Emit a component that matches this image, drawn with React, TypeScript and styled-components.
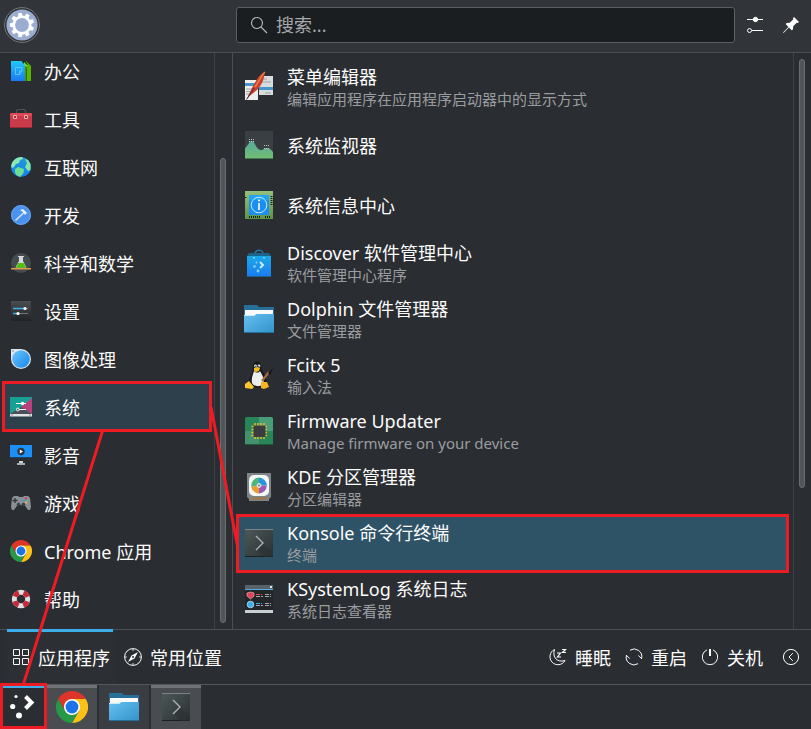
import React from "react";
import styled, { createGlobalStyle } from "styled-components";

const GlobalStyle = createGlobalStyle`
  * { box-sizing: border-box; }
  body {
    margin: 0;
    background: #2a2d31;
    color: #fcfcfc;
    font-family: "Noto Sans", "Noto Sans CJK SC", sans-serif;
    font-size: 18px;
  }
  button, input { font: inherit; color: inherit; }
  svg { display: block; }
`;

const MARK = "#ed1c24";
const LINE = "#4b4e52";

const Screen = styled.div`
  position: relative;
  display: flex;
  flex-direction: column;
  height: 100vh;
  overflow: hidden;
`;

const Header = styled.header`
  display: flex;
  align-items: center;
  height: 53px;
  padding: 0 8px 2px 4px;
  background: #313439;
  border-bottom: 1px solid ${LINE};
`;

const PlainButton = styled.button`
  display: flex;
  align-items: center;
  padding: 0;
  border: 0;
  background: none;
  cursor: pointer;
`;

const AvatarSlot = styled.div`
  flex: 0 0 232px;
`;

const SearchBox = styled.label`
  display: flex;
  flex: 1;
  align-items: center;
  gap: 8px;
  min-width: 0;
  height: 36px;
  padding-left: 13px;
  border: 1px solid #5c6063;
  border-radius: 3px;
  background: #1b1e20;
`;

const SearchInput = styled.input`
  flex: 1;
  min-width: 0;
  padding: 0;
  border: 0;
  outline: 0;
  background: none;
  &::placeholder { color: #a4a8ab; opacity: 1; }
`;

const HeaderActions = styled.div`
  display: flex;
  gap: 12px;
  padding-left: 8px;
`;

const IconButton = styled(PlainButton)`
  justify-content: center;
  width: 24px;
  height: 32px;
`;

const Content = styled.main`
  display: grid;
  grid-template-columns: 215px 18px minmax(0, 1fr) 17px;
  flex: 1;
  min-height: 0;
`;

const CategoryList = styled.ul`
  display: flex;
  flex-direction: column;
  justify-content: flex-end;
  min-height: 0;
  margin: 0;
  padding: 0 0 6px;
  overflow: hidden;
  list-style: none;
  border-right: 1px solid #3d4044;
`;

const Category = styled.li`
  position: relative;
  flex: none;
`;

const CategoryButton = styled(PlainButton)`
  position: relative;
  gap: 12px;
  width: 100%;
  height: 48px;
  padding-left: 10px;
`;

const CategoryName = styled.span`
  padding-top: 2px;
  line-height: 24px;
`;

const Scroll = styled.div<{ $divider?: boolean; $top: number; $bottom: number }>`
  padding: ${(p) => p.$top}px 0 ${(p) => p.$bottom}px 5px;
  border-right: ${(p) => (p.$divider ? `1px solid ${LINE}` : "0")};
`;

const Thumb = styled.div`
  width: 6px;
  height: 100%;
  border: 1px solid #6b6e70;
  border-radius: 3px;
  background: #515558;
`;

const AppList = styled.ul`
  margin: 0;
  padding: 6px 0 0;
  overflow: hidden;
  list-style: none;
  border-right: 1px solid #3d4044;
`;

const AppItem = styled.li`
  position: relative;
`;

const AppButton = styled(PlainButton)<{ $single?: boolean }>`
  position: relative;
  gap: 13px;
  width: 100%;
  height: ${(p) => (p.$single ? 60 : 56)}px;
  padding-left: 11px;
  text-align: left;
`;

const AppText = styled.span`
  display: flex;
  flex-direction: column;
  gap: 1px;
  padding-top: 1px;
`;

const AppName = styled.span`
  line-height: 22px;
`;

const AppNote = styled.span`
  color: #9a9da0;
  font-size: 15px;
  line-height: 20px;
`;

const Marker = styled.span<{ $wide?: boolean }>`
  position: absolute;
  inset: ${(p) => (p.$wide ? "-1px 4px -2px 3px" : "-2px 2px -1px 2px")};
  border: 3px solid ${MARK};
  background: ${(p) => (p.$wide ? "#2e5366" : "#2e404b")};
  pointer-events: none;
`;

const Footer = styled.nav`
  display: flex;
  height: 55px;
  padding-left: 4px;
  border-top: 1px solid ${LINE};
`;

const Tab = styled(PlainButton)<{ $active?: boolean }>`
  position: relative;
  gap: 8px;
  padding: 0 6px 0 8px;
  background: ${(p) => (p.$active ? "#2c2f33" : "none")};
  &::before {
    content: "";
    display: ${(p) => (p.$active ? "block" : "none")};
    position: absolute;
    top: -1px;
    left: 3px;
    right: 3px;
    height: 3px;
    background: #3daee9;
  }
`;

const Session = styled.div`
  display: flex;
  margin-left: auto;
`;

const SessionButton = styled(PlainButton)`
  gap: 8px;
  padding: 0 7px;
`;

const LeaveButton = styled(PlainButton)`
  padding: 0 11px 0 12px;
`;

const Taskbar = styled.footer`
  display: flex;
  gap: 2px;
  height: 45px;
  border-top: 1px solid #55585b;
`;

const Task = styled(PlainButton)<{ $open?: boolean }>`
  justify-content: center;
  width: 50px;
  background: ${(p) => (p.$open ? "#494c50" : "#3a3d42")};
  box-shadow: ${(p) => (p.$open ? "inset 0 3px #6f7376" : "none")};
`;

const Launcher = styled(PlainButton)`
  position: relative;
  justify-content: center;
  width: 45px;
  box-shadow: inset 0 3px #3daee9;
`;

const LauncherMarker = styled.span`
  position: absolute;
  inset: -2px -2px 0 0;
  border: 3px solid ${MARK};
`;

const Connectors = styled.svg`
  position: absolute;
  left: 0;
  bottom: 0;
  pointer-events: none;
`;

const IconSlot = styled.span<{ $size: number }>`
  display: flex;
  flex: none;
  align-items: center;
  justify-content: center;
  width: ${(p) => p.$size}px;
`;

type IconProps = { size?: number };

const Avatar = () => (
  <svg width="36" height="36" viewBox="0 0 36 36" aria-hidden="true">
    <circle cx="18" cy="18" r="17.4" fill="#2c3034" stroke="#75797d" strokeWidth="1" />
    <circle cx="18" cy="18" r="15.6" fill="#9aadd0" />
    <circle cx="18" cy="18" r="8.2" fill="none" stroke="#fff" strokeWidth="2.6" />
    {[20, 60, 100, 140, 180, 220, 260, 300, 340].map((a) => (
      <path key={a} d="M26 15.6 L30.2 16.3 V19.700 L26 20.400Z" fill="#fff" transform={`rotate(${a} 18 18)`} />
    ))}
  </svg>
);

const SearchIcon = () => (
  <svg width="18" height="18" viewBox="0 0 18 18" fill="none" stroke="#b9bdbf" strokeWidth="1.1" aria-hidden="true">
    <circle cx="7" cy="7" r="5.5" />
    <path d="M11 11 L17 17" />
  </svg>
);

const TuneIcon = () => (
  <svg width="18" height="18" viewBox="0 0 18 18" fill="none" stroke="#fcfcfc" aria-hidden="true">
    <path d="M1 3.5H17M6 14.5H17" />
    <circle cx="9.5" cy="3.5" r="2.2" fill="#fcfcfc" />
    <circle cx="3.5" cy="14.5" r="2" />
  </svg>
);

const PinIcon = () => (
  <svg width="18" height="18" viewBox="0 0 18 18" aria-hidden="true">
    <path d="M12 1 L17 6 L15.7 7 L14.7 6.7 L11.2 10.2 L11 13.6 L9.7 14.2 L6.9 11.4 L1.5 17 L1 16.5 L6.4 10.9 L3.8 8.2 L4.5 7 L7.8 6.8 L11.3 3.3 L11 2.2Z" fill="#fcfcfc" />
  </svg>
);

const Office = () => (
  <svg width="22" height="22" viewBox="0 0 22 22" aria-hidden="true">
    <defs><linearGradient id="office" x2="0" y2="1"><stop stopColor="#20c8fb" /><stop offset="1" stopColor="#1a79f3" /></linearGradient></defs>
    <path d="M9 1H16L21 6V21H9Z" fill="#59b300" />
    <path d="M12 1H15.5L18 5H12Z" fill="#17331c" /><path d="M14 2L18 6H14Z" fill="#8ade2b" />
    <path d="M1 1H11L15 5V21H1Z" fill="url(#office)" />
    <path d="M15.5 6V21H17V8Z" fill="#347700" />
    <path d="M5.5 7.5H12V11L9.5 14.5H5.5ZM9.5 14.5V11H12" fill="none" stroke="#6bcbff" strokeWidth=".8" />
  </svg>
);

const Toolbox = () => (
  <svg width="22" height="22" viewBox="0 0 22 22" aria-hidden="true">
    <path d="M6.5 5.5V2.5L8 1.5H14L15.5 2.5V5.5" fill="none" stroke="#505256" strokeWidth="1.2" />
    <path d="M0 6L1 5H21L22 6V20H0Z" fill="#ca3a49" /><path d="M0 6L1 5H21L22 6V8H0Z" fill="#df4855" />
    <path d="M0 19H22V20H0Z" fill="#922b37" />
    <path d="M3.5 7.5H6.5V10.5H3.5ZM14.5 7.5H17.5V10.5H14.5Z" fill="#9d2938" stroke="#eeb2b6" />
  </svg>
);

const Globe = () => (
  <svg width="22" height="22" viewBox="0 0 22 22" aria-hidden="true">
    <defs><linearGradient id="globe" x2="0" y2="1"><stop stopColor="#239bd6" /><stop offset="1" stopColor="#147ff1" /></linearGradient></defs>
    <circle cx="11" cy="11" r="10" fill="url(#globe)" />
    <path d="M2 7C4 3 8 1 12 1L13 3L10 4L9 7L6 8L4 11L2 12L1 10Z" fill="#8de9b1" />
    <path d="M5 13L8 11L14 13L13.5 17L10 21C7 20 5 18 5 16Z" fill="#6cdf91" />
    <path d="M15 3L18 4L20.500 8V14L18 15L15 11L17 7Z" fill="#80e5a5" />
  </svg>
);

const Develop = () => (
  <svg width="22" height="22" viewBox="0 0 22 22" aria-hidden="true">
    <circle cx="11" cy="11" r="10" fill="#4a92ee" /><circle cx="11" cy="11" r="9.4" fill="none" stroke="#66a5f2" />
    <path d="M5.5 16.5L15 7.5" stroke="#d3e5fc" strokeWidth="1.5" />
    <path d="M10 6L13 5L17 9L15 11L13.2 8.2Z" fill="#e8f2ff" />
  </svg>
);

const Science = () => (
  <svg width="22" height="22" viewBox="0 0 22 22" aria-hidden="true">
    <circle cx="11" cy="11" r="10" fill="#454c50" />
    <path d="M8 4H14V5H13V9L16.5 15.5H5.5L9 9V5H8Z" fill="#d3d8da" />
    <path d="M8.4 11H13.6L16 15.5H6Z" fill="#4bc309" />
    <path d="M1 16H21V17.5H1Z" fill="#dc9a45" />
  </svg>
);

const Sliders = () => (
  <svg width="22" height="22" viewBox="0 0 22 22" aria-hidden="true">
    <defs><linearGradient id="sliders" x2="0" y2="1"><stop stopColor="#4a4e51" /><stop offset="1" stopColor="#202326" /></linearGradient></defs>
    <path d="M1 1H21V21H1Z" fill="url(#sliders)" />
    <path d="M3 8.5H15M3 13.5H8" stroke="#3daee9" strokeWidth="1.3" />
    <path d="M15 8.5H18M8 13.5H18" stroke="#71767a" />
    <circle cx="15" cy="8.5" r="1.6" fill="#fff" /><circle cx="8" cy="13.5" r="1.6" fill="#fff" />
  </svg>
);

const Graphics = () => (
  <svg width="22" height="22" viewBox="0 0 22 22" aria-hidden="true">
    <defs><linearGradient id="graphics" x2="1" y2="1"><stop stopColor="#6cc6fb" /><stop offset="1" stopColor="#1688ed" /></linearGradient></defs>
    <path d="M1 1H11A10 10 0 1 1 1 11Z" fill="#dfe5e9" />
    <circle cx="11" cy="11" r="8.8" fill="url(#graphics)" /><circle cx="3" cy="3" r="1" fill="#8bb9d7" />
  </svg>
);

const SystemIcon = () => (
  <svg width="22" height="22" viewBox="0 0 22 22" aria-hidden="true">
    <path d="M0 1H22V20H0Z" fill="#18a095" /><path d="M22 2L11 11L22 18Z" fill="#c2417b" />
    <path d="M0 18L11 11L22 18Z" fill="#4b5059" /><path d="M22 3V18L12 10.500Z" fill="#b8417b" />
    <path d="M0 18H22V20.5H0Z" fill="#e1e4e5" /><path d="M1 19H3M19 19H21" stroke="#8b8e91" />
    <path d="M6 7.5H16M9 13.5H16" stroke="#fff" /><circle cx="12.5" cy="7.5" r="1.7" fill="#fff" />
    <circle cx="7.8" cy="13.5" r="1.4" fill="none" stroke="#fff" />
  </svg>
);

const Media = () => (
  <svg width="22" height="22" viewBox="0 0 22 22" aria-hidden="true">
    <path d="M0 1H22V13H0Z" fill="#1b91f7" /><path d="M0 13H22V14H0Z" fill="#1c4261" />
    <circle cx="11" cy="7.5" r="3.7" fill="#2d343a" /><path d="M9.8 5.5L13 7.5L9.8 9.5Z" fill="#fff" />
    <path d="M9 17H13V19H15V21H7V19H9Z" fill="#cbd0d3" /><path d="M7 19.500H15V20.500H7Z" fill="#7f878c" />
  </svg>
);

const Games = () => (
  <svg width="22" height="22" viewBox="0 0 22 22" aria-hidden="true">
    <path d="M4 4H8L9 5H13L14 4H18L20 6L21 15L20 18H18L14.5 13H7.5L4 18H2L1 15L2 6Z" fill="#8a9097" />
    <path d="M5 6V11M2.5 8.5H7.5" stroke="#33383d" strokeWidth="1.4" />
    <circle cx="16" cy="6.3" r="1.2" fill="#df4252" /><circle cx="18" cy="8.5" r="1.2" fill="#66ae7c" />
    <circle cx="14" cy="8.5" r="1.2" fill="#4d93d8" /><circle cx="16" cy="10.5" r="1.2" fill="#d4b05a" />
    <circle cx="8.5" cy="12.5" r="1.8" fill="#3b4045" /><circle cx="13.5" cy="12.5" r="1.8" fill="#3b4045" />
  </svg>
);

const Chrome = ({ size = 22 }: IconProps) => (
  <svg width={size} height={size} viewBox="0 0 48 48" aria-hidden="true">
    <path d="M3.2 12A24 24 0 0 1 44.8 12H24L13.6 30Z" fill="#df3529" />
    <path d="M44.8 12A24 24 0 0 1 24 48L34.4 30L24 12Z" fill="#fbc116" />
    <path d="M24 48A24 24 0 0 1 3.2 12L13.6 30H34.4Z" fill="#279847" />
    <circle cx="24" cy="24" r="12" fill="#fff" /><circle cx="24" cy="24" r="9.6" fill="#1a73e8" />
  </svg>
);

const Help = () => (
  <svg width="22" height="22" viewBox="0 0 22 22" fill="none" aria-hidden="true">
    <circle cx="11" cy="11" r="6.7" stroke="#dde1e3" strokeWidth="5" />
    <circle cx="11" cy="11" r="6.7" stroke="#c8283a" strokeWidth="5" strokeDasharray="5.7 4.82" strokeDashoffset="-2.4" />
  </svg>
);

const MenuEditor = () => (
  <svg width="28" height="32" viewBox="0 0 28 32" aria-hidden="true">
    <path d="M14 5H28V24H14Z" fill="#d9dcdd" /><path d="M0 9H13V29H0Z" fill="#eceeee" />
    <path d="M0 12H13V15H0ZM14 16H28V19H14Z" fill="#4795ca" />
    <path d="M1 18H8M1 20.500H5M1 23H4M16 8H22M17 11H26M20 22H26" stroke="#9ba3a7" />
    <path d="M2 28C4 22 8 15 12 8C14 5 17 2 20 1C19 7 18 12 13 18C10 21 6 23 2 28Z" fill="#c8402d" />
    <path d="M20 1C17 3 15 9 10 16" stroke="#f07f4c" strokeWidth="1.500" fill="none" />
    <path d="M1.500 28.500L9 17" stroke="#40292b" />
  </svg>
);

const Monitor = () => (
  <svg width="28" height="28" viewBox="0 0 28 28" aria-hidden="true">
    <defs><linearGradient id="wave" x2="0" y2="1"><stop stopColor="#54aa9b" /><stop offset="1" stopColor="#74be72" /></linearGradient></defs>
    <path d="M0 0H28V28H0Z" fill="#3a3f43" />
    <path d="M0 17C3 15 4 10 7 10C10 10 11 19 16 19C19 19 19 17 22 17C25 17 26 19 28 21V28H0Z" fill="url(#wave)" />
    <path d="M0 27H28V28H0Z" fill="#437a51" />
    <path d="M4 8.500H9M4 10.500H9M19 14.500H24M19 17.500H24" stroke="#b9c6c3" strokeDasharray="1 1" />
  </svg>
);

const InfoCenter = () => (
  <svg width="28" height="28" viewBox="0 0 28 28" aria-hidden="true">
    <defs><linearGradient id="board" x2="0" y2="1"><stop stopColor="#93c07d" /><stop offset="1" stopColor="#5f9348" /></linearGradient></defs>
    <path d="M0 0H28V28H0Z" fill="url(#board)" />
    <path d="M4 26H16M20 26H25M26.500 5V15" stroke="#15221a" strokeWidth="2" strokeDasharray="1 1" />
    <path d="M0 6.500H1.500" stroke="#15221a" />
    <path d="M4 4H24V24H4Z" fill="#1c8ef0" /><path d="M4 4H24V9H4Z" fill="#22a5f5" />
    <circle cx="14" cy="14" r="7.800" fill="none" stroke="#c3eaff" />
    <path d="M14 12V19" stroke="#fff" strokeWidth="1.600" /><circle cx="14" cy="9.500" r="1.100" fill="#fff" />
  </svg>
);

const Discover = () => (
  <svg width="28" height="28" viewBox="0 0 28 28" aria-hidden="true">
    <defs><linearGradient id="bag" x2="0" y2="1"><stop stopColor="#19a8e8" /><stop offset="1" stopColor="#1b7df0" /></linearGradient></defs>
    <path d="M9 8C9 -1 19 -1 19 8" fill="none" stroke="#277ca9" strokeWidth="1.400" />
    <path d="M4 4H24L26 7V28H2V7Z" fill="#1b648c" /><path d="M2 7H26V27H2Z" fill="url(#bag)" />
    <path d="M15 13L18 16L15 19" stroke="#cdebff" strokeWidth="2" fill="none" />
    <circle cx="11.500" cy="13.500" r="1" fill="#8fd2ff" /><circle cx="9.500" cy="17.500" r="1.300" fill="#8fd2ff" /><circle cx="13" cy="22" r="1.400" fill="#8fd2ff" />
    <path d="M9 8V9.500M19 8V9.500" stroke="#a6dfff" strokeWidth="1.500" />
  </svg>
);

const Folder = () => (
  <svg width="30" height="28" viewBox="0 0 30 28" aria-hidden="true">
    <defs><linearGradient id="folder" x2="1" y2="1"><stop stopColor="#67bff0" /><stop offset="1" stopColor="#3193cb" /></linearGradient></defs>
    <path d="M0 0H13L15 2H30V28H0Z" fill="#276f99" /><path d="M1 5H29V14H1Z" fill="#fafafa" />
    <path d="M0 11H10L12 9H30V28H0Z" fill="url(#folder)" /><path d="M0 10.500H10L12 9" stroke="#ccebfc" fill="none" />
    <path d="M0 27.500H30" stroke="#266f9a" />
  </svg>
);

const Penguin = () => (
  <svg width="28" height="28" viewBox="0 0 28 28" aria-hidden="true">
    <path d="M8 5C8 -1 16 -1 16 5C16 11 22 15 22 22C20 28 6 28 4 22C4 16 8 12 8 8Z" fill="#151719" />
    <path d="M9 10C11 12 14 12 15 10C17 14 20 17 18 23C16 26 9 26 7 22C6 17 8 14 9 10Z" fill="#eceded" />
    <path d="M9 7L12 6L15 7L14 10L11 11L9 10Z" fill="#f5bc20" />
    <circle cx="10.500" cy="5" r="1.400" fill="#e2e2e2" /><circle cx="14" cy="5" r="1.400" fill="#e2e2e2" />
    <circle cx="10.700" cy="5.300" r=".6" fill="#111" /><circle cx="13.800" cy="5.300" r=".6" fill="#111" />
    <path d="M0 23L4 20L9 26L7 28L0 27Z" fill="#fbc52b" /><path d="M16 21L22 21L24 26L19 28L16 27Z" fill="#f6b421" />
    <path d="M17 20L24 11" stroke="#a46b42" strokeWidth="2.200" /><path d="M23 12L28 7L25 14Z" fill="#101214" />
  </svg>
);

const Firmware = () => (
  <svg width="28" height="28" viewBox="0 0 28 28" aria-hidden="true">
    <rect width="28" height="28" rx="1.500" fill="#288558" /><path d="M14 0H26.500L28 1.500V14H14Z" fill="#499d78" />
    <path d="M0 14H14V28H1.500L0 26.500Z" fill="#45916e" /><path d="M0 27.500H28" stroke="#1b5c3f" />
    <path d="M10 6V22M13 6V22M16 6V22M19 6V22M6.500 9.500H22M6.500 12.500H22M6.500 15.500H22M6.500 18.500H22" stroke="#f1c232" strokeWidth="1.400" />
    <path d="M8.500 8.500H20.500V20H8.500Z" fill="#3b3c3f" />
  </svg>
);

const Partition = () => (
  <svg width="24" height="28" viewBox="0 0 24 28" aria-hidden="true">
    <path d="M0 0H24V24L22 26V28H2V26L0 24Z" fill="#7d8589" /><rect x="2" y="2" width="20" height="21" rx="5" fill="#f5f6f6" />
    <path d="M12 4.500A8 8 0 0 0 4.500 14L12 12.500Z" fill="#4fb67a" /><path d="M12 4.500A8 8 0 0 1 19.800 12.500H12Z" fill="#2495e1" />
    <path d="M19.800 12.500A8 8 0 0 1 12 20.500V12.500Z" fill="#9b59b6" /><path d="M12 20.500A8 8 0 0 1 4.300 14L12 12.500Z" fill="#ed9b2d" />
    <circle cx="12" cy="12.500" r="2" fill="#bdccd1" stroke="#e4eaec" /><circle cx="12" cy="12.500" r=".8" fill="#596773" />
    <path d="M4 25.500H20" stroke="#a5773e" strokeWidth="2" />
  </svg>
);

const Terminal = () => (
  <svg width="28" height="28" viewBox="0 0 28 28" aria-hidden="true">
    <defs><linearGradient id="terminal" x2="1" y2="1"><stop stopColor="#4d5858" /><stop offset="1" stopColor="#2a3033" /></linearGradient></defs>
    <path d="M0 0H28V28H0Z" fill="url(#terminal)" /><path d="M0 .5H28" stroke="#7a8388" />
    <path d="M0 27.500H28" stroke="#1c2023" /><path d="M18 14L28 24V28H19L11 20Z" fill="#292f32" opacity=".5" />
    <path d="M11 7L18 14L11 21" fill="none" stroke="#acb3b4" strokeWidth="1.400" />
  </svg>
);

const SystemLog = () => (
  <svg width="28" height="28" viewBox="0 0 28 28" aria-hidden="true">
    <path d="M0 0H28V28H0Z" fill="#232629" /><path d="M0 0H28V4H0Z" fill="#596268" />
    <path d="M25 1H27V3H25Z" fill="#e2e4e5" /><path d="M0 4.500H28" stroke="#4caee5" /><path d="M0 25H28V28H0Z" fill="#c8d0d2" />
    <path d="M2 8L5.500 7L9 8V11L5.500 14L2 11Z" fill="#de4658" stroke="#f4a6ad" strokeWidth=".7" />
    <circle cx="5.500" cy="19.500" r="3.300" fill="#3daee9" stroke="#b5e5ff" strokeWidth=".8" />
    <path d="M11 9.500H17" stroke="#e04b57" strokeDasharray="4 1" /><path d="M11 18.500H17" stroke="#3daee9" strokeDasharray="4 1" />
    <path d="M20 9.500H26M11 11.500H18M20 11.500H26M11 20.500H18M20 18.500H26M20 20.500H26" stroke="#a4aaad" strokeDasharray="4 1" />
  </svg>
);

const GridIcon = () => (
  <svg width="18" height="18" viewBox="0 0 18 18" fill="none" stroke="#fcfcfc" aria-hidden="true">
    <path d="M1.500 1.500H7.500V7.500H1.500ZM10.500 1.500H16.500V7.500H10.500ZM1.500 10.500H7.500V16.500H1.500ZM10.500 10.500H16.500V16.500H10.500Z" />
  </svg>
);

const Compass = () => (
  <svg width="18" height="18" viewBox="0 0 18 18" fill="none" stroke="#fcfcfc" aria-hidden="true">
    <circle cx="9" cy="9" r="8.400" />
    <path d="M14 4L10.500 10.500L4 14L7.500 7.500Z" fill="#fcfcfc" stroke="none" /><circle cx="9" cy="9" r="1" fill="#2a2d31" stroke="none" />
    <path d="M9 1V3M9 15V17M1 9H3M15 9H17" strokeWidth=".8" />
  </svg>
);

const Sleep = () => (
  <svg width="18" height="18" viewBox="0 0 18 18" fill="none" stroke="#fcfcfc" aria-hidden="true">
    <path d="M5.500 1.500A8 8 0 1 0 16 12.500C8 15 3 9 5.500 1.500Z" />
    <path d="M8 5H11.500L8.500 9H12M13 1.500H16.500L13.500 4.500H17" strokeWidth="1.200" />
  </svg>
);

const Restart = () => (
  <svg width="18" height="18" viewBox="0 0 18 18" fill="none" stroke="#fcfcfc" aria-hidden="true">
    <path d="M5 2.200A7.700 7.700 0 0 1 16.600 10.500M13 15.700A7.700 7.700 0 0 1 1.400 7.500" />
    <path d="M17 11L13.300 7.500M1 7L4.700 10.500" />
  </svg>
);

const Power = () => (
  <svg width="18" height="18" viewBox="0 0 18 18" fill="none" stroke="#fcfcfc" aria-hidden="true">
    <path d="M6 1.900A7.700 7.700 0 1 0 12 1.900" /><path d="M9 1V8" strokeWidth="2" />
  </svg>
);

const Back = () => (
  <svg width="18" height="18" viewBox="0 0 18 18" fill="none" stroke="#fcfcfc" aria-hidden="true">
    <circle cx="9" cy="9" r="7.600" /><path d="M10.800 5.200L7 9L10.800 12.800" />
  </svg>
);

const Plasma = () => (
  <svg width="27" height="28" viewBox="0 0 27 28" aria-hidden="true">
    <path d="M16.500 3.500L22.500 9.500L16.500 15.500" fill="none" stroke="#fff" strokeWidth="4" />
    <circle cx="7" cy="3.500" r="1.600" fill="#fff" /><circle cx="3.700" cy="13.500" r="2.600" fill="#fff" /><circle cx="10" cy="22.500" r="3" fill="#fff" />
  </svg>
);

const categories = [
  { name: "办公", icon: <Office /> },
  { name: "工具", icon: <Toolbox /> },
  { name: "互联网", icon: <Globe /> },
  { name: "开发", icon: <Develop /> },
  { name: "科学和数学", icon: <Science /> },
  { name: "设置", icon: <Sliders /> },
  { name: "图像处理", icon: <Graphics /> },
  { name: "系统", icon: <SystemIcon />, active: true },
  { name: "影音", icon: <Media /> },
  { name: "游戏", icon: <Games /> },
  { name: "Chrome 应用", icon: <Chrome /> },
  { name: "帮助", icon: <Help /> },
];

const apps = [
  { name: "菜单编辑器", note: "编辑应用程序在应用程序启动器中的显示方式", icon: <MenuEditor /> },
  { name: "系统监视器", icon: <Monitor /> },
  { name: "系统信息中心", icon: <InfoCenter /> },
  { name: "Discover 软件管理中心", note: "软件管理中心程序", icon: <Discover /> },
  { name: "Dolphin 文件管理器", note: "文件管理器", icon: <Folder /> },
  { name: "Fcitx 5", note: "输入法", icon: <Penguin /> },
  { name: "Firmware Updater", note: "Manage firmware on your device", icon: <Firmware /> },
  { name: "KDE 分区管理器", note: "分区编辑器", icon: <Partition /> },
  { name: "Konsole 命令行终端", note: "终端", icon: <Terminal />, active: true },
  { name: "KSystemLog 系统日志", note: "系统日志查看器", icon: <SystemLog /> },
];

export default function App() {
  return (
    <Screen>
      <GlobalStyle />
      <Header>
        <AvatarSlot>
          <PlainButton type="button" aria-label="用户"><Avatar /></PlainButton>
        </AvatarSlot>
        <SearchBox>
          <SearchIcon />
          <SearchInput type="text" placeholder="搜索..." aria-label="搜索" />
        </SearchBox>
        <HeaderActions>
          <IconButton type="button" aria-label="配置"><TuneIcon /></IconButton>
          <IconButton type="button" aria-label="固定"><PinIcon /></IconButton>
        </HeaderActions>
      </Header>

      <Content>
        <CategoryList>
          {categories.map((c) => (
            <Category key={c.name}>
              {c.active && <Marker />}
              <CategoryButton type="button">
                <IconSlot $size={22}>{c.icon}</IconSlot>
                <CategoryName>{c.name}</CategoryName>
              </CategoryButton>
            </Category>
          ))}
        </CategoryList>
        <Scroll $divider $top={105} $bottom={6}><Thumb /></Scroll>
        <AppList>
          {apps.map((a) => (
            <AppItem key={a.name}>
              {a.active && <Marker $wide />}
              <AppButton type="button" $single={!a.note}>
                <IconSlot $size={30}>{a.icon}</IconSlot>
                <AppText>
                  <AppName>{a.name}</AppName>
                  {a.note && <AppNote>{a.note}</AppNote>}
                </AppText>
              </AppButton>
            </AppItem>
          ))}
        </AppList>
        <Scroll $top={6} $bottom={141}><Thumb /></Scroll>
      </Content>

      <Footer>
        <Tab type="button" $active><GridIcon />应用程序</Tab>
        <Tab type="button"><Compass />常用位置</Tab>
        <Session>
          <SessionButton type="button"><Sleep />睡眠</SessionButton>
          <SessionButton type="button"><Restart />重启</SessionButton>
          <SessionButton type="button"><Power />关机</SessionButton>
          <LeaveButton type="button" aria-label="离开"><Back /></LeaveButton>
        </Session>
      </Footer>

      <Taskbar>
        <Launcher type="button" aria-label="应用程序启动器">
          <Plasma />
          <LauncherMarker />
        </Launcher>
        <Task type="button" aria-label="Chrome" $open><Chrome size={32} /></Task>
        <Task type="button" aria-label="Dolphin"><Folder /></Task>
        <Task type="button" aria-label="Konsole" $open><Terminal /></Task>
      </Taskbar>

      <Connectors width="240" height="330" viewBox="0 399 240 330" aria-hidden="true">
        <path d="M102.500 431L23.500 684M211 407L237.500 546" fill="none" stroke={MARK} strokeWidth="3" />
      </Connectors>
    </Screen>
  );
}
